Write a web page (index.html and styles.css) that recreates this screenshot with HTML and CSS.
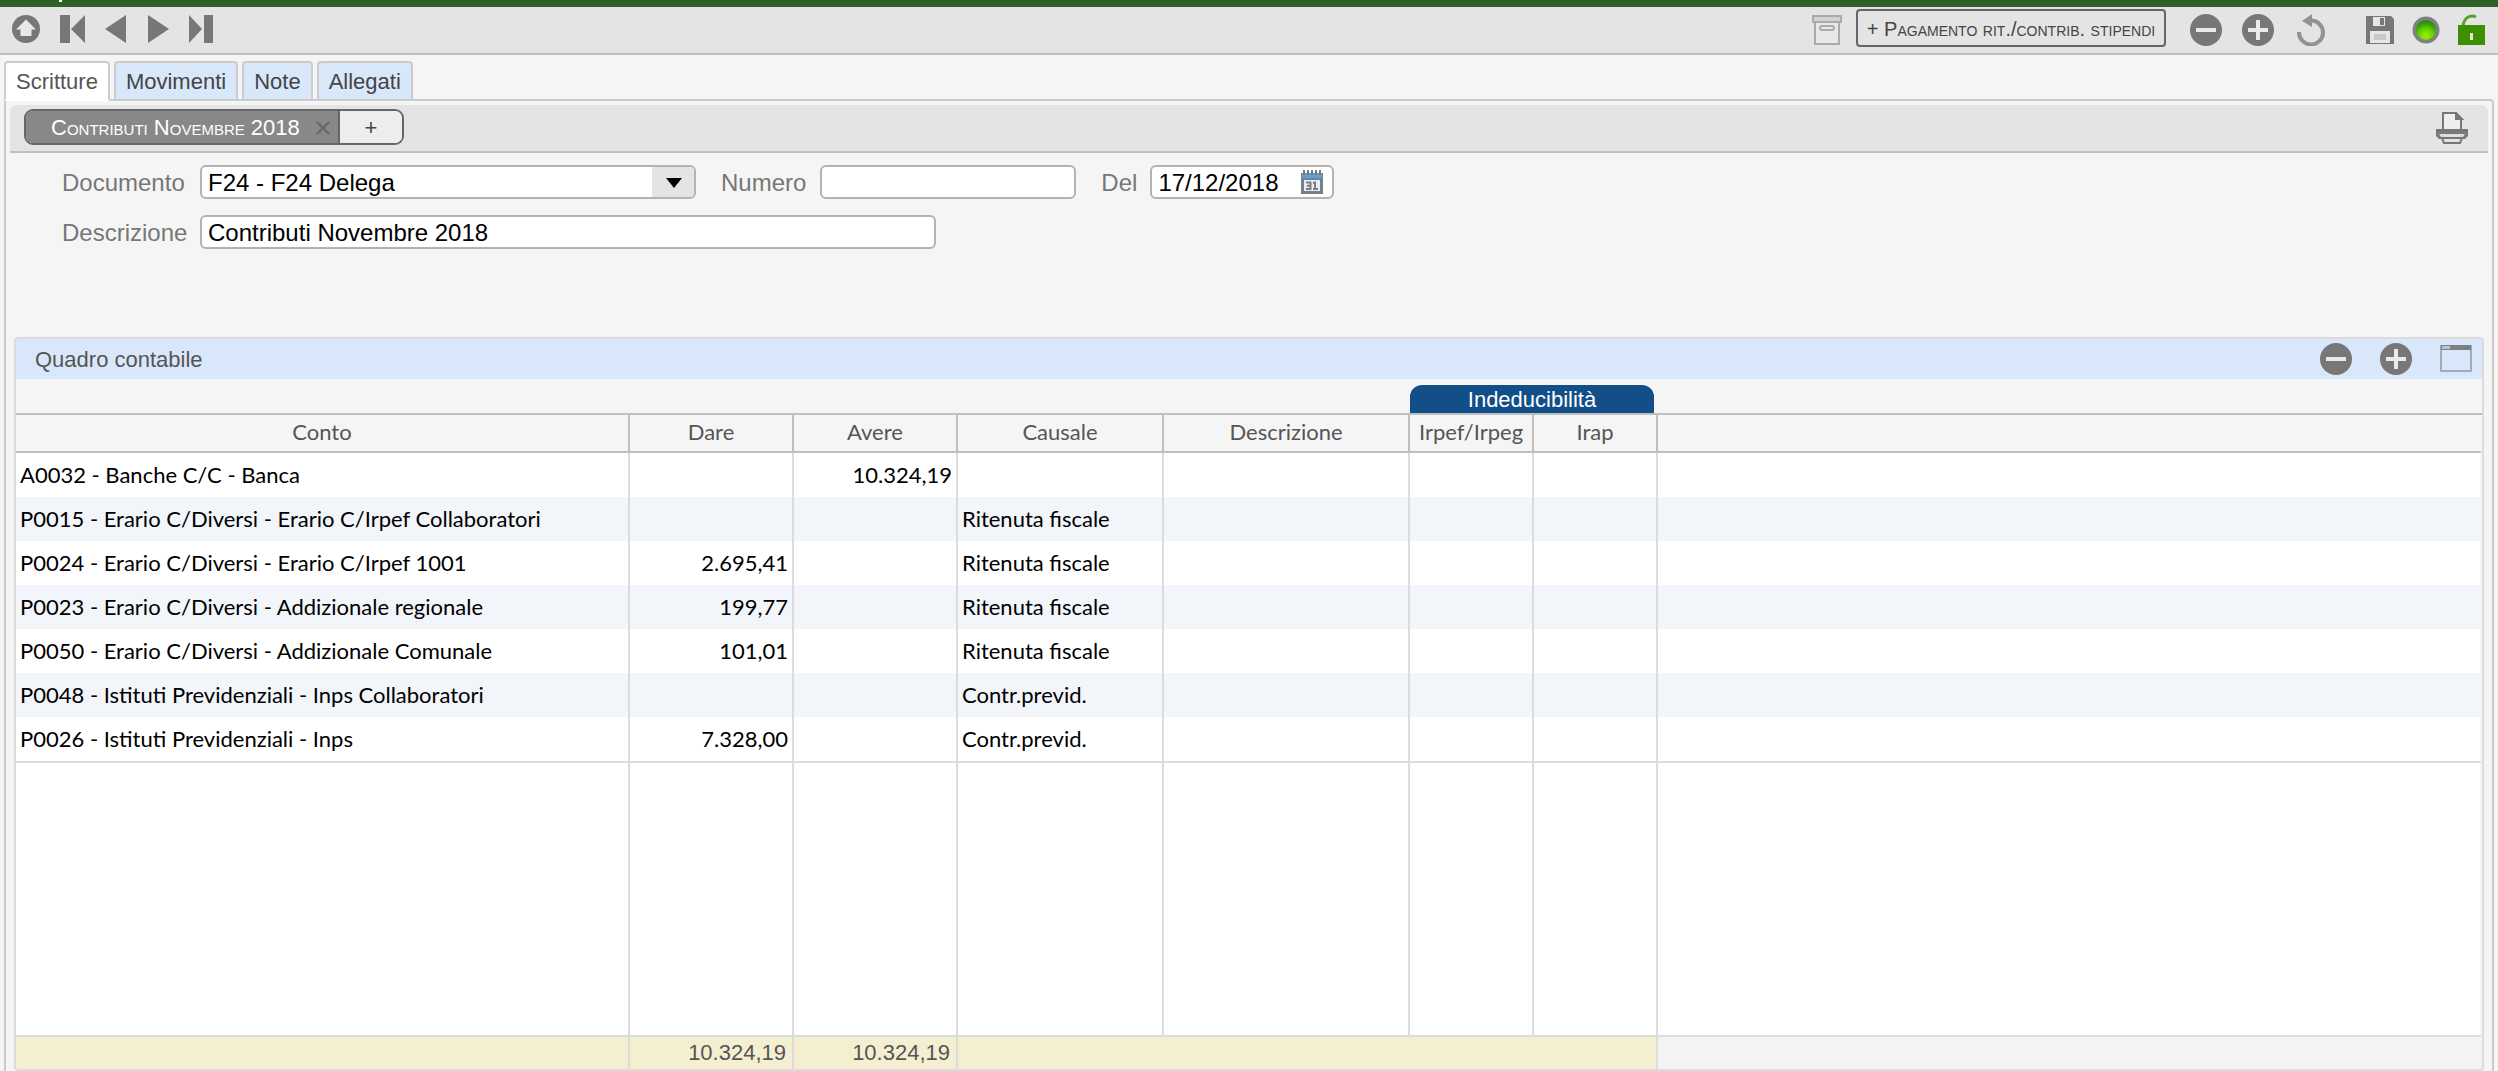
FILE: index.html
```html
<!DOCTYPE html>
<html lang="it">
<head>
<meta charset="utf-8">
<title>Scritture</title>
<link rel="stylesheet" href="styles.css">
</head>
<body>
<svg class="defs" aria-hidden="true">
  <symbol id="i-minus" viewBox="0 0 32 32"><circle cx="16" cy="16" r="16" fill="#777"/><path d="M6 16h20" stroke="#e9eaeb" stroke-width="4"/></symbol>
  <symbol id="i-plus" viewBox="0 0 32 32"><circle cx="16" cy="16" r="16" fill="#777"/><path d="M6 16h20M16 6v20" stroke="#e9eaeb" stroke-width="4"/></symbol>
</svg>
<div class="topbar"><i class="topbar-mark"></i></div>
<header class="toolbar">
  <nav class="tools nav-tools">
    <button class="icon s28" aria-label="Su"><svg viewBox="0 0 28 28"><circle cx="14" cy="14" r="14" fill="#777"/><path d="M14 4.500L24 14.500h-4.500V21h-11v-6.500H4z" fill="#e9e9e9"/></svg></button>
    <button class="icon w25" aria-label="Primo"><svg viewBox="0 0 25 28"><path d="M0 0h10v28H0zM25 0v28L11 14z" fill="#777"/></svg></button>
    <button class="icon w22" aria-label="Precedente"><svg viewBox="0 0 22 28"><path d="M21 0v28L0 14z" fill="#777"/></svg></button>
    <button class="icon w22" aria-label="Successivo"><svg viewBox="0 0 22 28"><path d="M1 0v28L22 14z" fill="#777"/></svg></button>
    <button class="icon w25" aria-label="Ultimo"><svg viewBox="0 0 25 28"><path d="M0 0l13 14L0 28zM15 0h9v28h-9z" fill="#777"/></svg></button>
  </nav>
  <div class="tools">
    <button class="icon s30" aria-label="Archivia"><svg viewBox="0 0 30 30" fill="none" stroke="#aaa" stroke-width="2"><path d="M3 7v22h24V7z" fill="#e8e8e8"/><path d="M1 1h28v6H1z" fill="#d2d2d2"/><rect x="8" y="11" width="14" height="4" rx="2"/></svg></button>
    <button class="action">+ Pagamento rit./contrib. stipendi</button>
    <div class="tools edit-tools">
      <button class="icon s32" aria-label="Elimina"><svg><use href="#i-minus"/></svg></button>
      <button class="icon s32" aria-label="Aggiungi"><svg><use href="#i-plus"/></svg></button>
      <button class="icon s32" aria-label="Annulla"><svg viewBox="0 0 32 32"><path d="M17 6.500A12 12 0 1 1 5 18" fill="none" stroke="#929292" stroke-width="4"/><path d="M18 0v13L8 7z" fill="#929292"/></svg></button>
    </div>
    <div class="tools save-tools">
      <button class="icon s28" aria-label="Salva"><svg viewBox="0 0 28 28"><path d="M0 0h25l3 3v25H0z" fill="#777"/><path d="M7 1h12v9H7zM4 15h20v12H4z" fill="#e6e6e6"/><path d="M14 2h4v7h-4z" fill="#777"/><path d="M8 18h12v6H8z" fill="#c8c8c8"/></svg></button>
      <button class="icon s28" aria-label="Stato"><svg viewBox="0 0 28 28"><defs><radialGradient id="led" cx=".5" cy=".8" r=".7"><stop offset="0" stop-color="#a6ee00"/><stop offset=".5" stop-color="#62d500"/><stop offset="1" stop-color="#2c8c10"/></radialGradient></defs><circle cx="14" cy="14" r="13.500" fill="#808080"/><circle cx="14" cy="14" r="10" fill="url(#led)"/></svg></button>
      <button class="icon s32" aria-label="Sblocca"><svg viewBox="0 0 32 32"><path d="M5 12C6 4 12 0 18 3" fill="none" stroke="#55a02c" stroke-width="3"/><path d="M0 11h27v20H0z" fill="#3d8f00"/><path d="M12 19h3v7h-3z" fill="#dde9d2"/></svg></button>
    </div>
  </div>
</header>
<nav class="tabs">
  <button class="tab active">Scritture</button>
  <button class="tab">Movimenti</button>
  <button class="tab">Note</button>
  <button class="tab">Allegati</button>
</nav>
<main class="panel">
  <div class="docbar">
    <div class="segments">
      <button class="segment current">Contributi Novembre 2018<svg class="close" viewBox="0 0 14 14"><path d="M1 1l12 12M13 1L1 13" stroke="#666" stroke-width="2"/></svg></button>
      <button class="segment add">+</button>
    </div>
    <button class="icon s32" aria-label="Stampa"><svg viewBox="0 0 32 32" fill="none" stroke="#777" stroke-width="2"><path d="M7 17V1h13l5 6v10" fill="#eee"/><path d="M20 1v6h6z" fill="#777"/><path d="M0 17h32v7l-3 3H3l-3-3z" fill="#777" stroke="none"/><path d="M3 22h26l-2 3H5z" fill="#ddd" stroke="none"/><path d="M6 26h20l-2 5H8z" fill="#e4e4e4"/></svg></button>
  </div>
  <form class="form">
    <div class="line">
      <label for="documento">Documento</label>
      <div class="field combo"><select id="documento"><option>F24 - F24 Delega</option></select><span class="drop"><svg viewBox="0 0 16 10"><path d="M0 0h16L8 10z"/></svg></span></div>
      <label for="numero">Numero</label>
      <input class="field number" id="numero" type="text">
      <label for="del">Del</label>
      <div class="field date"><input id="del" type="text" value="17/12/2018"><button type="button" class="icon s24" aria-label="Calendario"><svg viewBox="0 0 24 24"><path d="M1 3h22v21H1z" fill="#75808c"/><path d="M2 3h20v5H2z" fill="#5f9fd4"/><path d="M4 10h16v11H4z" fill="#e9edf3"/><path d="M4 0v5M8 0v5M12 0v5M16 0v5M20 0v5" stroke="#777" stroke-width="2"/><path d="M6 12.500h4.500v6.500H6M7 15.800h3M13 13l2-.5V19M13 19h5" fill="none" stroke="#75808c" stroke-width="2"/></svg></button></div>
    </div>
    <div class="line">
      <label for="descrizione">Descrizione</label>
      <input class="field desc" id="descrizione" type="text" value="Contributi Novembre 2018">
    </div>
  </form>
  <section class="ledger">
    <div class="ledger-head">
      <h2>Quadro contabile</h2>
      <div class="tools ledger-tools">
        <button class="icon s32" aria-label="Elimina riga"><svg><use href="#i-minus"/></svg></button>
        <button class="icon s32" aria-label="Aggiungi riga"><svg><use href="#i-plus"/></svg></button>
        <button class="icon s32" aria-label="Espandi"><svg viewBox="0 0 32 32"><path d="M1 3h30v25H1z" fill="none" stroke="#a3abb4" stroke-width="2"/><path d="M1 2h30v5H1z" fill="#7c7f83"/><path d="M2 3h8v3H2z" fill="#bbc3cc"/></svg></button>
      </div>
    </div>
    <table>
      <colgroup><col class="c-conto"><col class="c-amount"><col class="c-amount"><col class="c-causale"><col class="c-desc"><col class="c-tax"><col class="c-tax"><col></colgroup>
      <thead>
        <tr class="groups"><td colspan="5"></td><th colspan="2" scope="colgroup"><div class="group">Indeducibilità</div></th><td></td></tr>
        <tr class="heads"><th>Conto</th><th>Dare</th><th>Avere</th><th>Causale</th><th>Descrizione</th><th>Irpef/Irpeg</th><th>Irap</th><td></td></tr>
      </thead>
      <tbody>
        <tr><td>A0032 - Banche C/C - Banca</td><td></td><td>10.324,19</td><td></td><td></td><td></td><td></td><td></td></tr>
        <tr><td>P0015 - Erario C/Diversi - Erario C/Irpef Collaboratori</td><td></td><td></td><td>Ritenuta fiscale</td><td></td><td></td><td></td><td></td></tr>
        <tr><td>P0024 - Erario C/Diversi - Erario C/Irpef 1001</td><td>2.695,41</td><td></td><td>Ritenuta fiscale</td><td></td><td></td><td></td><td></td></tr>
        <tr><td>P0023 - Erario C/Diversi - Addizionale regionale</td><td>199,77</td><td></td><td>Ritenuta fiscale</td><td></td><td></td><td></td><td></td></tr>
        <tr><td>P0050 - Erario C/Diversi - Addizionale Comunale</td><td>101,01</td><td></td><td>Ritenuta fiscale</td><td></td><td></td><td></td><td></td></tr>
        <tr><td>P0048 - Istituti Previdenziali - Inps Collaboratori</td><td></td><td></td><td>Contr.previd.</td><td></td><td></td><td></td><td></td></tr>
        <tr class="last"><td>P0026 - Istituti Previdenziali - Inps</td><td>7.328,00</td><td></td><td>Contr.previd.</td><td></td><td></td><td></td><td></td></tr>
        <tr class="filler"><td></td><td></td><td></td><td></td><td></td><td></td><td></td><td></td></tr>
      </tbody>
      <tfoot>
        <tr><td></td><td>10.324,19</td><td>10.324,19</td><td colspan="4"></td><td></td></tr>
      </tfoot>
    </table>
  </section>
</main>
</body>
</html>
```
FILE: styles.css
```css
* { box-sizing: border-box; }
body {
  margin: 0;
  min-height: 100vh;
  display: flex;
  flex-direction: column;
  background: #f5f5f5;
  color: #555;
  font: 22px/28px "Liberation Sans", Arial, sans-serif;
}
button, input, select { font: inherit; color: inherit; margin: 0; padding: 0; border: 0; background: none; }
.defs { position: absolute; width: 0; height: 0; }

.topbar { height: 7px; background: #2f6228; padding-left: 59px; }
.topbar-mark { display: block; width: 3px; height: 2px; background: #fff; }

.toolbar {
  height: 48px;
  display: flex;
  justify-content: space-between;
  align-items: center;
  padding: 0 8px 0 12px;
  background: #e4e4e4;
  border-bottom: 2px solid #bfbfbf;
}
.tools { display: flex; align-items: center; gap: 14px; }
.nav-tools { gap: 20px; }
.edit-tools { gap: 20px; margin: 0 26px 0 10px; }
.save-tools { gap: 18px; }
.icon { display: block; height: 28px; flex: none; }
.icon svg { display: block; width: 100%; height: 100%; }
.s24 { width: 24px; height: 24px; }
.s28 { width: 28px; }
.s30 { width: 30px; height: 30px; }
.s32 { width: 32px; height: 32px; }
.w25 { width: 25px; }
.w22 { width: 22px; }
.nav-tools { margin-top: -2px; }
.action {
  width: 310px;
  height: 38px;
  margin-top: -4px;
  padding-top: 2px;
  border: 2px solid #666;
  border-radius: 4px;
  font-size: 20px;
  font-variant: small-caps;
  color: #444;
  white-space: nowrap;
}

.tabs { display: flex; gap: 4px; padding: 6px 4px 0; margin-bottom: -2px; position: relative; }
.tab {
  height: 40px;
  padding: 2px 10px 0;
  border: 2px solid #ccc;
  border-radius: 4px 4px 0 0;
  background: #d8e8fa;
  color: #444;
}
.tab.active { background: #fff; border-bottom-color: #fff; color: #555; }

.panel {
  flex: 1;
  display: flex;
  flex-direction: column;
  margin: 0 4px;
  padding: 4px 4px 0;
  border: 2px solid #ccc;
  border-bottom: 0;
  border-radius: 0 4px 0 0;
}
.docbar {
  height: 48px;
  display: flex;
  justify-content: space-between;
  align-items: center;
  padding: 0 20px 0 14px;
  background: #e4e4e4;
  border-bottom: 2px solid #bfbfbf;
  border-radius: 6px 6px 0 0;
}
.segments { display: flex; height: 36px; border: 2px solid #666; border-radius: 9px; overflow: hidden; margin-top: -2px; }
.segment { background: #ededed; width: 62px; padding-top: 2px; color: #444; }
.segment.current {
  display: flex;
  align-items: center;
  justify-content: space-between;
  width: 314px;
  padding: 2px 8px 0 25px;
  border-right: 2px solid #666;
  background: #888;
  color: #fff;
  font-variant: small-caps;
  white-space: nowrap;
}
.close { width: 14px; height: 14px; }

.form { display: flex; flex-direction: column; gap: 16px; padding: 12px 0 88px 52px; font-size: 24px; color: #777; }
.line { display: flex; align-items: center; height: 34px; }
.line label { flex: none; padding-top: 2px; }
.line label:first-child { width: 138px; }
.field { height: 34px; border: 2px solid #b3b3b3; border-radius: 6px; background: #fff; color: #000; flex: none; }
input.field { padding: 2px 6px 0; }
.combo { display: flex; width: 496px; margin-right: 25px; position: relative; overflow: hidden; }
.combo select { appearance: none; width: 100%; padding: 2px 50px 0 6px; }
.drop {
  position: absolute; right: 0; top: 0; bottom: 0; width: 42px;
  display: flex; align-items: center; justify-content: center;
  padding: 2px 0 0 2px;
  background: #e4e4e4; pointer-events: none;
}
.drop svg { width: 16px; height: 10px; }
.number { width: 256px; margin: 0 25px 0 14px; }
.date { display: flex; align-items: center; justify-content: space-between; width: 184px; margin-left: 13px; padding: 0 8px 0 6px; }
.date input { width: 136px; padding-top: 2px; }
.desc { width: 736px; }

.ledger {
  flex: 1;
  margin: 0 4px;
  display: grid;
  grid-template-rows: 40px 1fr;
  border: 2px solid #dcdcdc;
  border-radius: 4px;
  overflow: hidden;
}
.ledger-head { display: flex; align-items: center; justify-content: space-between; padding: 0 10px 0 19px; background: #d8e8fa; }
.ledger-head h2 { margin: 0; padding-top: 2px; font-size: 22px; font-weight: 400; }
.ledger-tools { gap: 28px; }

table {
  width: 100%;
  height: 100%;
  table-layout: fixed;
  border-collapse: separate;
  border-spacing: 0;
  font: 22px/28px Lato, "Noto Sans", sans-serif;
}
.c-conto { width: 614px; }
.c-amount { width: 164px; }
.c-causale { width: 206px; }
.c-desc { width: 246px; }
.c-tax { width: 124px; }
th, td { padding: 0 4px; font-weight: 400; text-align: left; white-space: nowrap; border-right: 2px solid #dcdcdc; }
td:last-child { border-right-color: #f5f5f5; }
.groups > * { height: 36px; padding: 0; border-right: 0; border-bottom: 2px solid #bfbfbf; vertical-align: bottom; }
.group {
  height: 28px;
  margin-right: 4px;
  border-radius: 12px 12px 0 0;
  background: #124e87;
  color: #fff;
  font: 22px/30px "Liberation Sans", Arial, sans-serif;
  text-align: center;
}
.heads > * { height: 38px; padding-bottom: 2px; border-bottom: 2px solid #bfbfbf; border-right-color: #bfbfbf; text-align: center; }
tbody td { height: 44px; background: #fff; color: #000; }
tbody tr:nth-child(even):not(.filler) td { background: #f2f5fa; }
tbody td:nth-child(2), tbody td:nth-child(3) { text-align: right; }
tbody .last td { height: 46px; border-bottom: 2px solid #dcdcdc; }
tbody .filler td { height: auto; border-bottom: 2px solid #dcdcdc; }
tfoot td { height: 32px; padding: 0 6px; background: #f5efd2; font-family: "Liberation Sans", Arial, sans-serif; text-align: right; }
tfoot td:last-child { background: #f3f3f3; border-right: 0; }
```
